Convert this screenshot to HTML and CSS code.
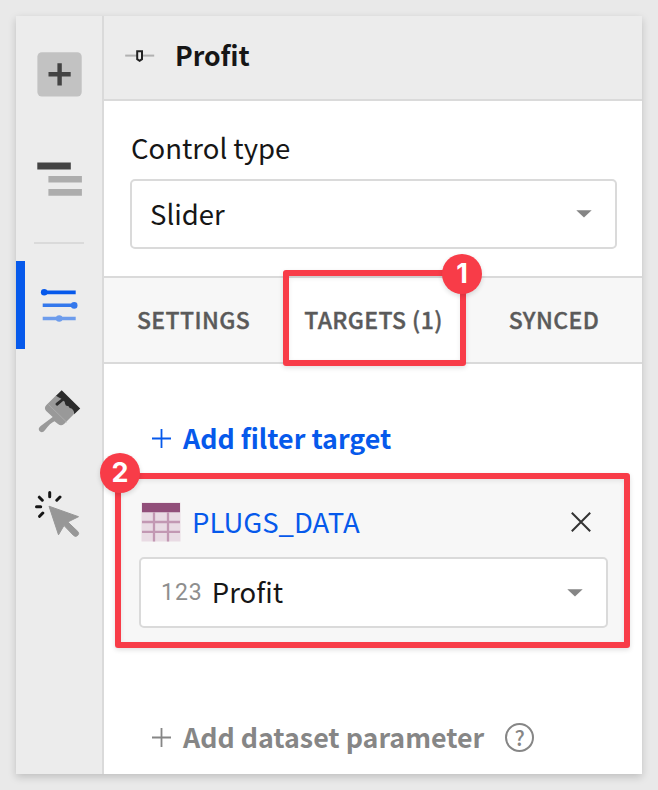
FILE: index.html
```html
<!DOCTYPE html>
<html lang="en">
<head>
<meta charset="utf-8">
<title>Profit control</title>
<link rel="stylesheet" href="styles.css">
</head>
<body>
<div class="frame">
  <nav class="sidebar">
    <button class="nav-item nav-add" aria-label="Add">
      <svg width="45" height="45" viewBox="0 0 45 45"><rect x=".4" y=".3" width="44.300" height="44.300" rx="4.500" fill="#c2c2c2"/><path d="M11.500 22.300h22.200M22.600 11.200v22.200" stroke="#434343" stroke-width="4.400"/></svg>
    </button>
    <button class="nav-item nav-outline" aria-label="Outline">
      <svg width="45" height="34" viewBox="0 0 45 34"><path fill="#434343" d="M.3.500h33.500v7H.3z"/><path fill="#adadad" d="M11.400 14h33.500v6.600H11.400zM11.400 27h33.500v6.700H11.400z"/></svg>
    </button>
    <hr class="divider">
    <button class="nav-item nav-controls" aria-label="Controls">
      <svg width="38" height="36" viewBox="0 0 38 36"><g fill="#0659eb"><path d="M3 2.400h32.700v3.800H3z"/><circle cx="4.200" cy="4.300" r="3.300"/></g><g fill="#3478ec"><path d="M2.700 15.600H35v3.500H2.700z"/><circle cx="34.200" cy="17.400" r="3.300"/></g><g fill="#6d9cec"><path d="M2.700 28.800h33v3.400h-33z"/><circle cx="19.200" cy="30.500" r="3.300"/></g></svg>
    </button>
    <button class="nav-item nav-format" aria-label="Format">
      <svg width="44" height="44" viewBox="0 0 44 44"><path fill="#999" d="M19 5.500 9.400 15Q6.500 18 9.200 21L15.700 27 4 35.800Q0 39 3 41.500 6 43.500 8.500 39.500 13 33.200 17.500 31.200L21 34Q24 36.500 27 34L37 24 36 12 25 6Z"/><path fill="#2c2c2c" d="M24.700.2 43.200 18.500 37.200 24.300Q37 20 34.500 18.500 32.500 18.500 31.300 16 28.500 16.500 28 13.500 28.300 11.500 26.300 10.800L20.500 15.800Q18 15.500 18.700 13.300L24.500 8.700Q22 7.500 19 5.700Z"/><path d="m11.500 14.500 18.500 18" stroke="#b1b1b1" stroke-width=".7"/></svg>
    </button>
    <button class="nav-item nav-actions" aria-label="Actions">
      <svg width="46" height="48" viewBox="0 0 46 48"><path fill="#979797" stroke="#979797" stroke-width="1" stroke-linejoin="round" d="m14 16.200 29.500 10.500-10.700 5.300 10 9.500q1.800 2-.2 4-2 1.800-4 0L29 35.500l-5.500 9.300Z"/><path stroke="#161616" stroke-width="3" stroke-linecap="round" d="M14.700 2.600v4.200M4.300 7.200l3 3M25 7l-3.200 3.200M1.500 16.700h4.200M7.800 23l-3.200 3.300"/></svg>
    </button>
  </nav>
  <main class="panel">
    <header class="header">
      <svg width="30" height="14" viewBox="0 0 30 14"><path d="M.2 6.600h29" stroke="#b1b1b1" stroke-width="2"/><path fill="#ececec" stroke="#222" stroke-width="2" d="M12.200 2.200H17v8l-2.400 1.600-2.400-1.600z"/></svg>
      <h1 class="title">Profit</h1>
    </header>
    <section class="control">
      <label class="label">Control type</label>
      <div class="select"><span class="value">Slider</span><svg class="caret" width="16" height="8" viewBox="0 0 16 8"><path fill="#858585" d="M.3.300h15.400L8 7.600z"/></svg></div>
    </section>
    <div class="tabs">
      <div class="tab tab-settings"><span>SETTINGS</span></div>
      <div class="tab tab-targets"><span>TARGETS (1)</span><div class="outline outline-tab"></div><div class="badge badge-tab">1</div></div>
      <div class="tab tab-synced"><span>SYNCED</span></div>
    </div>
    <section class="targets">
      <div class="add add-filter"><svg width="19" height="19" viewBox="0 0 19 19"><path d="M0 9.500h19M9.500 0v19" stroke="currentColor" stroke-width="1.800"/></svg><span>Add filter target</span></div>
      <div class="card">
        <div class="source">
          <svg width="40" height="40" viewBox="0 0 40 40"><path fill="#e9dbe4" d="M.5.500h39v39H.5z"/><path fill="#914f7a" d="M1 1h38v9.300H1z"/><path d="M1 20h38M1 29.800h38M13 10.300v29.200M27 10.300v29.200" stroke="#c298b3" stroke-width="2.300"/></svg>
          <span class="source-name">PLUGS_DATA</span>
          <svg class="close" width="20" height="20" viewBox="0 0 20 20"><path d="m.8.800 18.400 18.400M19.200.800.800 19.200" stroke="#333" stroke-width="2"/></svg>
        </div>
        <div class="select select-column"><span class="type">123</span><span class="column">Profit</span><svg class="caret" width="16" height="8" viewBox="0 0 16 8"><path fill="#858585" d="M.3.300h15.400L8 7.600z"/></svg></div>
        <div class="outline outline-card"></div><div class="badge badge-card">2</div>
      </div>
      <div class="add add-parameter"><svg width="19" height="19" viewBox="0 0 19 19"><path d="M0 9.500h19M9.500 0v19" stroke="currentColor" stroke-width="1.800"/></svg><span>Add dataset parameter</span><i class="help">?</i></div>
    </section>
  </main>
</div>
</body>
</html>
```
FILE: styles.css
```css
* { box-sizing: border-box; }
body {
  margin: 0;
  padding: 16px;
  height: 790px;
  overflow: hidden;
  background: #e9e9e9;
  color: #161616;
  font: 400 27.5px/40px "Noto Sans CJK SC", sans-serif;
}
svg { display: block; flex: none; }
.frame { display: flex; width: 626px; height: 758px; background: #fff; box-shadow: 0 3px 8px rgba(0,0,0,.18); }
.sidebar { width: 88px; background: #ececec; border-right: 2px solid #dadada; display: flex; flex-direction: column; }
.nav-item { display: block; border: 0; padding: 0; background: none; }
.nav-add { margin: 36px 0 0 21px; height: 45px; }
.nav-outline { margin: 65px 0 0 21px; height: 34px; }
.divider { width: 50px; height: 2px; margin: 46px 0 17px 18px; border: 0; background: #dadada; }
.nav-controls { height: 88px; padding: 2px 0 0 15px; border-left: 9px solid #0659eb; }
.nav-format { margin: 41px 0 0 21px; height: 44px; }
.nav-actions { margin: 56px 0 0 19px; height: 48px; }
.panel { flex: 1; min-width: 0; }
.header { height: 85px; padding: 0 0 3px 21px; display: flex; align-items: center; background: #ececec; border-bottom: 2px solid #dadada; }
.title { margin: -2px 0 0 20px; font: 700 26.6px/40px "Noto Sans CJK SC", sans-serif; }
.control { height: 175px; padding: 26px 25px 0 26px; }
.label { display: block; height: 52px; padding-left: 1px; }
.select { display: flex; align-items: center; height: 70px; padding: 0 23px 0 18px; border: 2px solid #dadada; border-radius: 5px; background: #fff; }
.value { margin-top: -2px; }
.caret { margin-left: auto; }
.tabs { display: flex; height: 88px; border: solid #dadada; border-width: 2px 0; background: #f7f7f7; color: #5a5a5a; font-size: 23px; font-weight: 500; letter-spacing: .4px; }
.tab { display: flex; align-items: center; justify-content: center; padding-bottom: 2px; white-space: nowrap; }
.tab > span { -webkit-text-stroke: .4px #5a5a5a; }
.tab-settings { width: 179px; }
.tab-targets { position: relative; width: 181px; background: #fff; }
.tab-synced { flex: 1; padding-left: 2px; }
.outline { position: absolute; border: 6px solid #f83c48; border-radius: 3px; box-shadow: 0 2px 5px rgba(0,0,0,.12), inset 0 2px 5px rgba(0,0,0,.08); pointer-events: none; }
.outline-tab { left: 0; top: -8px; width: 183px; height: 96px; }
.badge { position: absolute; width: 40px; height: 40px; border-radius: 50%; background: #f83c48; color: #fff; font: 700 27px/40px Inter, sans-serif; letter-spacing: 0; text-align: center; box-shadow: 0 2px 5px rgba(0,0,0,.14); }
.badge-tab { left: 159px; top: -24px; }
.add { display: flex; align-items: center; height: 40px; font-size: 26.8px; font-weight: 700; white-space: nowrap; }
.add svg { margin-top: 1px; }
.add span { margin-left: 12px; }
.targets { padding-top: 54px; }
.add-filter { padding-left: 48px; color: #0659eb; }
.card { position: relative; margin: 17px 12px 0 11px; height: 173px; padding: 27px 22px 0 24px; background: #f7f7f7; }
.source { display: flex; align-items: center; height: 40px; padding: 0 17px 0 2px; color: #0659eb; }
.source-name { margin: -2px 0 0 11px; }
.close { margin-left: auto; }
.select-column { height: 71px; margin-top: 15px; padding: 0 23px 2px 20px; }
.select-column .caret { margin-top: 2px; }
.type { color: #8e8e8e; font: 400 23px/40px Roboto, sans-serif; letter-spacing: 1px; margin-top: 3px; }
.column { margin: -2px 0 0 9px; }
.outline-card { left: 0; top: -2px; width: 515px; height: 175px; }
.badge-card { left: -15px; top: -22px; }
.add-parameter { margin-top: 69px; padding-left: 48px; color: #868686; }
.help { width: 29px; height: 29px; margin-left: 21px; border: 2px solid #868686; border-radius: 50%; font: 500 21px/24px "Noto Sans CJK SC", sans-serif; text-align: center; }
```
